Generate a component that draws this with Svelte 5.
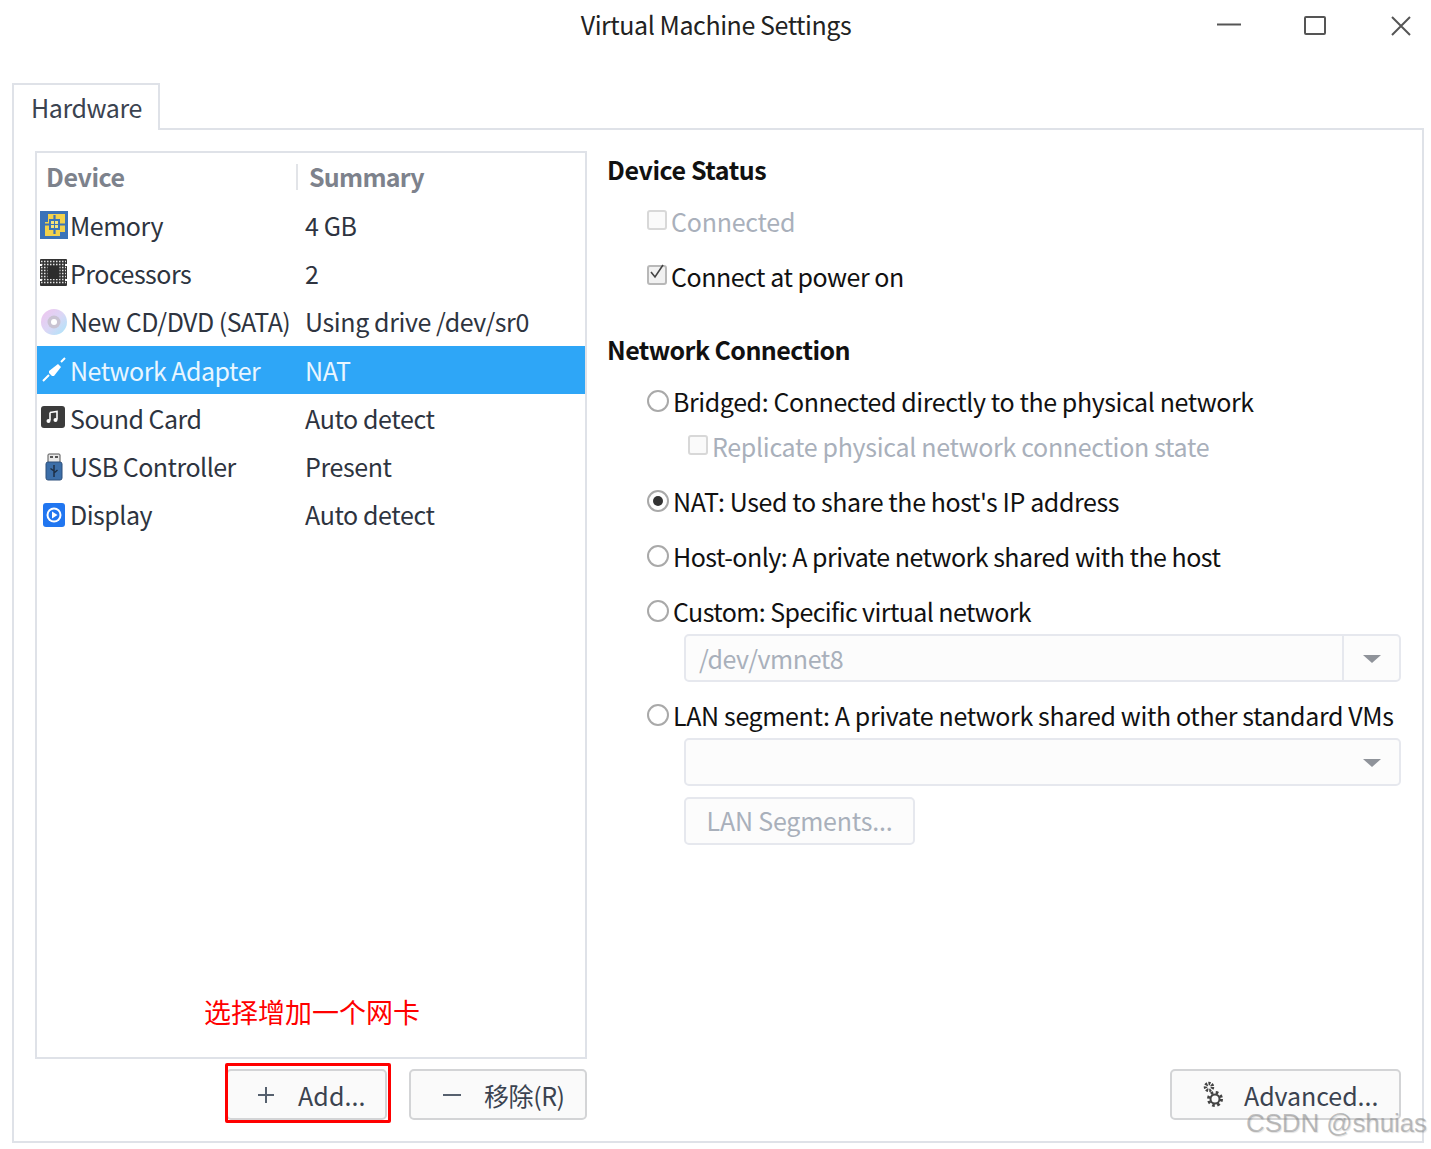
<script>
  const devices = [
    { icon: "memory", name: "Memory", summary: "4 GB" },
    { icon: "cpu", name: "Processors", summary: "2" },
    { icon: "cd", name: "New CD/DVD (SATA)", summary: "Using drive /dev/sr0" },
    { icon: "net", name: "Network Adapter", summary: "NAT", selected: true },
    { icon: "sound", name: "Sound Card", summary: "Auto detect" },
    { icon: "usb", name: "USB Controller", summary: "Present" },
    { icon: "display", name: "Display", summary: "Auto detect" },
  ];
</script>

<div class="window">
  <header class="titlebar">
    <span class="title">Virtual Machine Settings</span>
    <div class="controls">
      <svg width="26" height="26" viewBox="0 0 26 26"><path d="M1 11.5H25" stroke="#555" stroke-width="2" /></svg>
      <svg width="24" height="24" viewBox="0 0 24 24"><rect x="2" y="3" width="20" height="17" rx="1" fill="none" stroke="#555" stroke-width="2" /></svg>
      <svg class="close" width="22" height="22" viewBox="0 0 22 22"><path d="M2 2L20 20M20 2L2 20" stroke="#555" stroke-width="2" /></svg>
    </div>
  </header>

  <div class="tabs"><div class="tab">Hardware</div></div>

  <div class="pane">
    <section class="left">
      <div class="list">
        <div class="list-head">
          <span class="col-a">Device</span>
          <span class="col-b">Summary</span>
        </div>
        {#each devices as d}
          <div class="row" class:selected={d.selected}>
            <span class="ico">
              {#if d.icon === "memory"}
                <svg width="28" height="28" viewBox="0 0 28 28">
                  <rect x="0" y="0" width="28" height="28" fill="#3a73b8" />
                  <path d="M8 3H25V21H20V25H5V11H8Z" fill="#f2d24b" />
                  <rect x="10" y="9" width="9" height="9" fill="#f6e27a" stroke="#3a73b8" stroke-width="2" />
                  <path d="M14.500 4V9M14.500 18V23M5 13.500H10M19 13.500H25" stroke="#3a73b8" stroke-width="2.200" />
                  <path d="M14.500 9V18M10 13.500H19" stroke="#3a73b8" stroke-width="1" />
                </svg>
              {:else if d.icon === "cpu"}
                <svg width="28" height="28" viewBox="0 0 28 28">
                  <rect x="0" y="0" width="27" height="27" rx="1" fill="#333" />
                  <path d="M1 2.500H26M1 5.500H26M1 8.500H26M1 11.500H26M1 14.500H26M1 17.500H26M1 20.500H26M1 23.500H26" stroke="#e4e4e4" stroke-width="1.500" stroke-dasharray="1.500 1.500" />
                  <rect x="7.500" y="7" width="12" height="13" fill="#2c2c2c" />
                  <path d="M0 5H2V7H0ZM25 5H27V7H25ZM0 20H2V22H0ZM25 20H27V22H25Z" fill="#fff" />
                </svg>
              {:else if d.icon === "cd"}
                <svg width="28" height="28" viewBox="0 0 28 28">
                  <defs>
                    <linearGradient id="cdg" x1="0" y1="0" x2="1" y2="1">
                      <stop offset="0" stop-color="#f0c4ee" />
                      <stop offset="0.5" stop-color="#dcd6f5" />
                      <stop offset="1" stop-color="#a9e6fa" />
                    </linearGradient>
                  </defs>
                  <circle cx="14" cy="14" r="13" fill="url(#cdg)" />
                  <circle cx="14" cy="14" r="6.500" fill="#c9c3d2" />
                  <circle cx="14" cy="14" r="3" fill="#fff" />
                </svg>
              {:else if d.icon === "net"}
                <svg width="28" height="28" viewBox="0 0 28 28">
                  <path d="M3 25L9 19M21 6L25 2" stroke="#fff" stroke-width="2" />
                  <path d="M9 15L18 8L21 11L14 20L12 20L9 17Z" fill="#fff" />
                </svg>
              {:else if d.icon === "sound"}
                <svg width="26" height="26" viewBox="0 0 26 26">
                  <rect x="1" y="1" width="24" height="22" rx="3" fill="#3b3b3b" />
                  <path d="M10 7.5V15.5M10 7.5L17 6.5V14.5" stroke="#fff" stroke-width="1.6" fill="none" />
                  <circle cx="8.5" cy="16" r="2" fill="#fff" />
                  <circle cx="15.5" cy="15" r="2" fill="#fff" />
                </svg>
              {:else if d.icon === "usb"}
                <svg width="28" height="28" viewBox="0 0 28 28">
                  <rect x="8" y="1" width="12" height="9" rx="1" fill="#e8e8e8" stroke="#555" />
                  <rect x="10" y="3" width="3" height="2" fill="#555" />
                  <rect x="15" y="3" width="3" height="2" fill="#555" />
                  <rect x="6" y="9" width="16" height="18" rx="2" fill="#3c6ea8" stroke="#2d4f7a" />
                  <path d="M14 12V24M14 18L10.500 15.500M14 20L17.500 17" stroke="#1e2f45" stroke-width="1.5" fill="none" />
                </svg>
              {:else}
                <svg class="disp" width="24" height="26" viewBox="0 0 24 26">
                  <rect x="1" y="1" width="22" height="24" rx="3" fill="#2176f0" />
                  <circle cx="12" cy="13" r="7.500" fill="#fff" />
                  <circle cx="12" cy="13" r="5.500" fill="#2176f0" />
                  <path d="M10 9.500L15.500 13L10 16.500Z" fill="#fff" />
                </svg>
              {/if}
            </span>
            <span class="name">{d.name}</span>
            <span class="summary">{d.summary}</span>
          </div>
        {/each}
      </div>
      <div class="btn-row">
        <button class="btn add">
          <svg class="sym" width="18" height="18" viewBox="0 0 18 18"><path d="M9 1V17M1 9H17" stroke="#56606e" stroke-width="2" /></svg>
          Add...
        </button>
        <button class="btn remove">
          <svg class="sym" width="18" height="18" viewBox="0 0 18 18"><path d="M0 9H18" stroke="#56606e" stroke-width="2" /></svg>
          移除(R)
        </button>
      </div>
    </section>

    <section class="right">
      <h2 class="status">Device Status</h2>
      <label class="check off first"><span class="box"></span>Connected</label>
      <label class="check power">
        <span class="box">
          <svg width="20" height="20" viewBox="0 0 20 20"><path d="M4 9L8 14L16 2" stroke="#444" stroke-width="1.600" fill="none" /></svg>
        </span>Connect at power on
      </label>

      <h2 class="network">Network Connection</h2>
      <label class="radio r-bridged"><span class="dot"></span>Bridged: Connected directly to the physical network</label>
      <label class="check off sub"><span class="box"></span>Replicate physical network connection state</label>
      <label class="radio r-nat"><span class="dot on"></span>NAT: Used to share the host's IP address</label>
      <label class="radio r-host"><span class="dot"></span>Host-only: A private network shared with the host</label>
      <label class="radio r-custom"><span class="dot"></span>Custom: Specific virtual network</label>
      <div class="combo">
        <span class="combo-text">/dev/vmnet8</span>
        <span class="combo-arrow split"></span>
      </div>
      <label class="radio r-lan"><span class="dot"></span>LAN segment: A private network shared with other standard VMs</label>
      <div class="combo second">
        <span class="combo-text"></span>
        <span class="combo-arrow"></span>
      </div>
      <div class="seg">LAN Segments...</div>

      <div class="adv-row">
        <button class="btn adv">
          <svg width="24" height="28" viewBox="0 0 24 28">
            <g fill="none" stroke="#444">
              <circle cx="7" cy="6" r="3.500" stroke-width="3.500" stroke-dasharray="2 1.100" />
              <circle cx="13" cy="18" r="7" stroke="#fafafa" stroke-width="3" />
              <circle cx="13" cy="18" r="6.500" stroke-width="3" stroke-dasharray="2.600 2.500" />
              <circle cx="13" cy="18" r="4.500" stroke-width="2" />
            </g>
          </svg>
          Advanced...
        </button>
      </div>
    </section>
  </div>

  <!-- screenshot annotations drawn over the dialog -->
  <span class="note">选择增加一个网卡</span>
  <span class="redbox"></span>
  <span class="watermark">CSDN @shuias</span>
</div>

<style>
  :global(body) {
    margin: 0;
    background: #fff;
  }
  .window {
    position: relative;
    width: 1431px;
    height: 1149px;
    overflow: hidden;
    background: #fff;
    font-family: "Noto Sans CJK SC", "Noto Sans", sans-serif;
    font-size: 25px;
    letter-spacing: -0.43px;
    color: #2e3440;
  }
  .titlebar {
    position: relative;
    height: 53px;
    display: flex;
    align-items: center;
    justify-content: center;
  }
  .title {
    color: #222;
    line-height: 53px;
    margin-top: -5px;
    margin-left: 1px;
  }
  .controls {
    position: absolute;
    top: 13px;
    right: 19px;
    display: flex;
    align-items: center;
    gap: 61px;
  }
  .close {
    margin-left: 2px;
  }
  .tabs {
    margin-top: 30px;
    padding-left: 12px;
    display: flex;
  }
  .tab {
    width: 148px;
    height: 47px;
    box-sizing: border-box;
    border: 2px solid #dfe2e8;
    border-bottom: none;
    padding-left: 17px;
    line-height: 44px;
    color: #3b4350;
    background: #fff;
    position: relative;
    margin-bottom: -2px;
    z-index: 1;
  }
  .pane {
    margin-left: 12px;
    width: 1412px;
    height: 1015px;
    box-sizing: border-box;
    border: 2px solid #dfe2e8;
    padding: 21px;
    display: flex;
    gap: 20px;
  }
  .left {
    width: 552px;
    flex: none;
    display: flex;
    flex-direction: column;
  }
  .list {
    height: 908px;
    flex: none;
    box-sizing: border-box;
    border: 2px solid #dfe2e8;
  }
  .list-head {
    height: 48px;
    display: flex;
    align-items: center;
    font-weight: 700;
    color: #7d828c;
    font-size: 25px;
  }
  .col-a {
    width: 261px;
    padding-left: 9px;
    box-sizing: border-box;
    height: 26px;
    line-height: 24px;
    border-right: 2px solid #e2e4e8;
  }
  .col-b {
    padding-left: 11px;
    margin-top: -2px;
    letter-spacing: -0.75px;
  }
  .row {
    height: 48.300px;
    display: flex;
    align-items: center;
    position: relative;
    letter-spacing: -0.5px;
  }
  .row.selected {
    background: #2ea6f7;
    color: #e9f6ff;
  }
  .ico {
    width: 33px;
    padding-left: 3px;
    flex: none;
    box-sizing: border-box;
    display: flex;
    align-items: center;
    height: 28px;
  }
  .disp {
    margin-left: 2px;
  }
  .name {
    width: 235px;
    flex: none;
    white-space: nowrap;
    margin-top: -1px;
  }
  .summary {
    white-space: nowrap;
    margin-top: -1px;
    letter-spacing: -0.4px;
  }
  .btn-row {
    margin-top: 10px;
    display: flex;
    justify-content: flex-end;
    gap: 22px;
  }
  .btn {
    height: 51px;
    box-sizing: border-box;
    border: 2px solid #d3d4d6;
    border-radius: 5px;
    background: #fafafa;
    font: inherit;
    letter-spacing: inherit;
    color: #3b4350;
    display: flex;
    align-items: center;
    padding: 0;
  }
  .add {
    width: 161px;
    padding-left: 29px;
    letter-spacing: 0.1px;
  }
  .add .sym {
    margin-right: 23px;
  }
  .remove {
    width: 178px;
    padding-left: 32px;
  }
  .sym {
    flex: none;
    margin-right: 23px;
  }
  .right {
    flex: 1;
    display: flex;
    flex-direction: column;
    min-width: 0;
    margin-top: -1px;
  }
  h2 {
    margin: 0;
    font-size: 25px;
    font-weight: 700;
    color: #111;
    line-height: 38px;
  }
  .check, .radio {
    display: flex;
    align-items: center;
    line-height: 38px;
    color: #111;
    white-space: nowrap;
    padding-left: 39px;
  }
  .check.off {
    color: #a9b0bb;
  }
  .box {
    width: 20px;
    height: 20px;
    box-sizing: border-box;
    border: 2px solid #d8d8d8;
    border-radius: 3px;
    background: #fafafa;
    margin-left: 1px;
    margin-right: 4px;
    margin-top: -2px;
    position: relative;
    flex: none;
  }
  .box svg {
    position: absolute;
    left: -2px;
    top: -4px;
  }
  .power .box {
    border-color: #b8b8b8;
    background: #f1f1f1;
  }
  .dot {
    width: 22px;
    height: 22px;
    box-sizing: border-box;
    border: 2px solid #a9a9a9;
    border-radius: 50%;
    margin-left: 1px;
    margin-right: 4px;
    margin-top: -1px;
    flex: none;
    background: #fff;
    position: relative;
  }
  .dot.on::after {
    content: "";
    position: absolute;
    left: 4px;
    top: 4px;
    width: 10px;
    height: 10px;
    border-radius: 50%;
    background: #333;
  }
  .first { margin-top: 14px; letter-spacing: -0.23px; }
  .power { margin-top: 17px; letter-spacing: -0.47px; }
  .network { margin-top: 35px; letter-spacing: -0.58px; }
  .r-bridged { margin-top: 14px; letter-spacing: -0.41px; }
  .sub { margin-top: 7px; padding-left: 80px; letter-spacing: -0.31px; }
  .r-nat { margin-top: 17px; letter-spacing: -0.4px; }
  .r-host { margin-top: 17px; letter-spacing: -0.51px; }
  .r-custom { margin-top: 17px; letter-spacing: -0.59px; }
  .combo {
    margin-top: 4px;
    margin-left: 77px;
    width: 717px;
    height: 48px;
    box-sizing: border-box;
    border: 2px solid #e6e8ee;
    border-radius: 5px;
    background: #fcfcfc;
    display: flex;
    align-items: stretch;
  }
  .combo-text {
    flex: 1;
    padding-left: 13px;
    line-height: 44px;
    color: #a9b0bb;
  }
  .combo-arrow {
    width: 55px;
    flex: none;
    position: relative;
  }
  .combo-arrow.split {
    border-left: 2px solid #e6e8ee;
  }
  .combo-arrow::after {
    content: "";
    position: absolute;
    left: 19px;
    top: 19px;
    border-left: 9px solid transparent;
    border-right: 9px solid transparent;
    border-top: 8px solid #8f939a;
  }
  .r-lan { margin-top: 14px; letter-spacing: -0.37px; }
  .second { margin-top: 4px; }
  .seg {
    margin-top: 11px;
    margin-left: 77px;
    width: 231px;
    height: 48px;
    box-sizing: border-box;
    border: 2px solid #e6e8ee;
    border-radius: 5px;
    background: #fcfcfc;
    color: #a9b0bb;
    text-align: center;
    line-height: 42px;
    letter-spacing: -0.2px;
  }
  .adv-row {
    margin-top: auto;
    display: flex;
    justify-content: flex-end;
  }
  .adv {
    width: 231px;
    padding-left: 30px;
    gap: 18px;
    letter-spacing: -0.05px;
  }
  .note {
    position: absolute;
    left: 204px;
    top: 993px;
    font-size: 27px;
    letter-spacing: 0;
    line-height: 38px;
    color: #f00;
  }
  .redbox {
    position: absolute;
    left: 225px;
    top: 1063px;
    width: 166px;
    height: 60px;
    box-sizing: border-box;
    border: 3px solid #f00;
    border-radius: 2px;
  }
  .watermark {
    position: absolute;
    left: 1246px;
    top: 1106px;
    font-family: "Liberation Sans", sans-serif;
    font-size: 25.8px;
    letter-spacing: 0;
    line-height: 34px;
    white-space: nowrap;
    color: rgba(140, 140, 140, 0.55);
    text-shadow: 1px 1px 1px rgba(0, 0, 0, 0.12);
  }
</style>
